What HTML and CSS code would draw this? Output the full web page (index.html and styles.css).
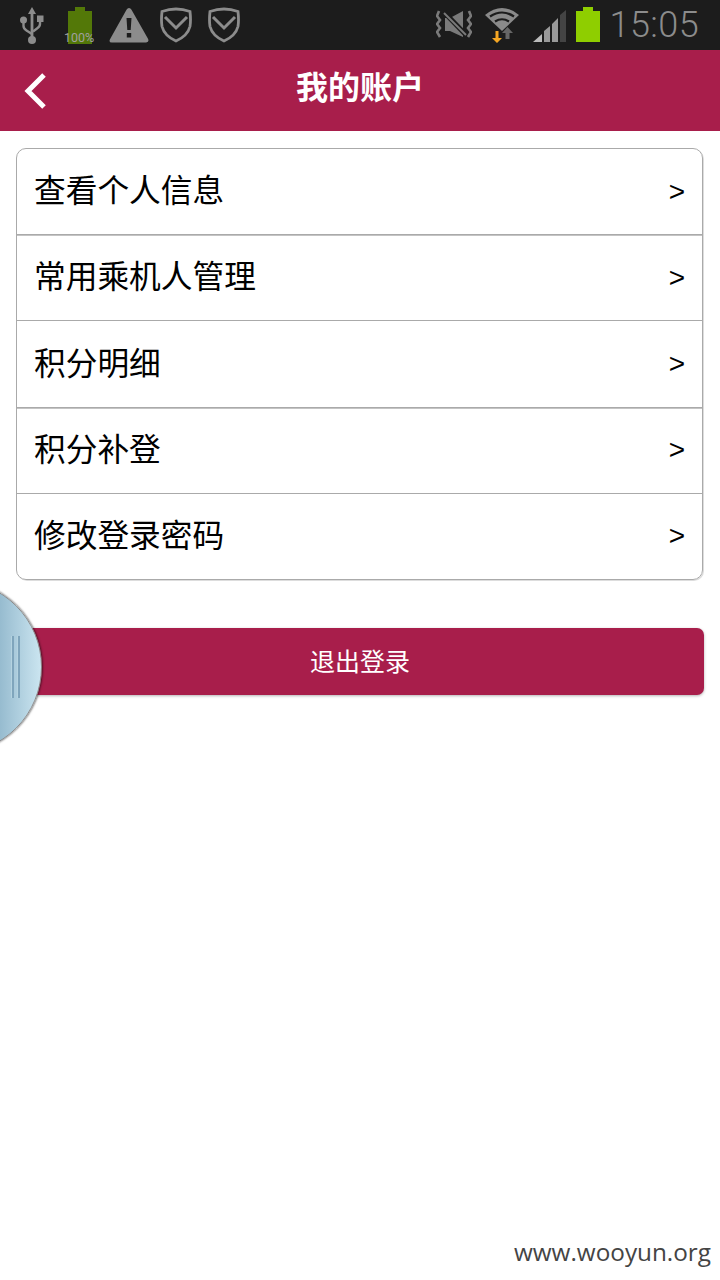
FILE: index.html
```html
<!DOCTYPE html>
<html lang="zh">
<head>
<meta charset="utf-8">
<title>我的账户</title>
<link rel="stylesheet" href="styles.css">
</head>
<body>
<div class="status">
  <div class="status-left">
    <svg class="i-usb" viewBox="0 0 24 38" width="24" height="38"><g fill="#8c8c8c"><path d="M12 0l4 7h-2.600v25h-2.800V7H8z"/><circle cx="12" cy="33" r="4"/><circle cx="3.500" cy="13" r="3.500"/><rect x="17" y="8.500" width="6.500" height="6.500"/></g><path d="M3.500 13v6q0 2.500 3 4.500l5.500 3.500M20 14v3q0 2.500-3 4.500l-4 3" fill="none" stroke="#8c8c8c" stroke-width="2.400"/></svg>
    <div class="batt-small">
      <svg viewBox="0 0 24 37" width="24" height="37"><path d="M7 0h10v4h7v33H0V4h7z" fill="#537808"/></svg>
      <span class="batt-label">100%</span>
    </div>
    <svg class="i-warn" viewBox="0 0 40 37" width="40" height="37"><path d="M20 1q1.500 0 2.500 1.800l16.500 29q1.500 3.200-1.800 3.700H2.800Q-.5 35.500 1 32.300l16.500-29.500Q18.500 1 20 1z" fill="#8c8c8c"/><path d="M17.500 11h5l-.8 12h-3.400zM17.800 26h4.400v4.400h-4.400z" fill="#1c1c1c"/></svg>
    <svg class="i-shield-a" viewBox="0 0 32 36" width="32" height="36"><path d="M16 2q7 0 14 2.500 1 9 0 15Q27.500 29 16 34 4.500 29 2 19.500q-1-6 0-15Q9 2 16 2z" fill="none" stroke="#8c8c8c" stroke-width="2.800"/><path d="M5 10l11 11L27 10" fill="none" stroke="#8c8c8c" stroke-width="3"/></svg>
    <svg class="i-shield-b" viewBox="0 0 32 36" width="32" height="36"><path d="M16 2q7 0 14 2.500 1 9 0 15Q27.500 29 16 34 4.500 29 2 19.500q-1-6 0-15Q9 2 16 2z" fill="none" stroke="#8c8c8c" stroke-width="2.800"/><path d="M5 10l11 11L27 10" fill="none" stroke="#8c8c8c" stroke-width="3"/></svg>
  </div>
  <div class="status-right">
    <svg class="i-mute" viewBox="0 0 36 28" width="36" height="28"><path d="M9 8h5l13-7v26l-13-6H9z" fill="#7a7a7a"/><path d="M7 1l24 25" stroke="#1c1c1c" stroke-width="5"/><path d="M8 3l22 22" stroke="#7a7a7a" stroke-width="2"/><path d="M3 1L1 6l3 4-3 4 3 4-3 4 3 5M33 1l2 5-3 4 3 4-3 4 3 4-3 5" fill="none" stroke="#7a7a7a" stroke-width="2.600"/></svg>
    <svg class="i-wifi" viewBox="0 0 34 38" width="34" height="38"><path d="M17 24L0 8q17-14 34 0z" fill="#8a8a8a"/><path d="M5 9.500q12-8 24 0M10 14.500q7-4.500 14 0" fill="none" stroke="#1c1c1c" stroke-width="2.200"/><path d="M22.500 20l5.500 6h-3.500v6h-4v-6H17z" fill="#666"/><path d="M10.500 24h3v7H17l-5 5-5-5h3.500z" fill="#f5a623"/></svg>
    <svg class="i-signal" viewBox="0 0 33 32" width="33" height="32"><path d="M33 0v32h-6V5z" fill="#444"/><path d="M25 8v24h-6V14zM17 16v16h-6V21z" fill="#999"/><path d="M9 24v8H0z" fill="#bbb"/></svg>
    <svg class="i-batt" viewBox="0 0 24 35" width="24" height="35"><path d="M7 0h10v4h7v31H0V4h7z" fill="#8fce00"/></svg>
    <span class="clock">15:05</span>
  </div>
</div>
<header class="topbar">
  <svg class="back" viewBox="0 0 24 38" width="24" height="38"><path d="M21 3L5 19l16 16" fill="none" stroke="#fff" stroke-width="5"/></svg>
  <h1 class="title">我的账户</h1>
</header>
<main class="content">
  <ul class="menu">
    <li class="row"><span class="label">查看个人信息</span><span class="arrow">&gt;</span></li>
    <li class="row"><span class="label">常用乘机人管理</span><span class="arrow">&gt;</span></li>
    <li class="row"><span class="label">积分明细</span><span class="arrow">&gt;</span></li>
    <li class="row"><span class="label">积分补登</span><span class="arrow">&gt;</span></li>
    <li class="row"><span class="label">修改登录密码</span><span class="arrow">&gt;</span></li>
  </ul>
  <button class="logout">退出登录</button>
</main>
<div class="handle"><i class="grip"></i><i class="grip"></i></div>
<div class="watermark">www.wooyun.org</div>
</body>
</html>
```
FILE: styles.css
```css
* { box-sizing: border-box; }
html, body { margin: 0; padding: 0; }
body {
  position: relative;
  width: 720px;
  height: 1280px;
  overflow: hidden;
  background: #fff;
  font-family: "Noto Sans CJK SC", "Noto Sans", sans-serif;
}
.status {
  height: 50px;
  background: #1c1c1c;
  display: flex;
  justify-content: space-between;
  align-items: center;
  padding: 0 21px 0 20px;
}
.status-left, .status-right { display: flex; align-items: center; }
.status-left svg, .status-right svg { display: block; }
.i-usb { margin-top: 1px; }
.batt-small { position: relative; width: 24px; height: 37px; margin: 1px 0 0 24px; }
.i-warn { margin: 1px 0 0 17px; }
.i-shield-a { margin-left: 11px; }
.i-shield-b { margin-left: 16px; }
.batt-label {
  position: absolute;
  left: -4px;
  bottom: -1px;
  font: 12.500px "Roboto", sans-serif;
  color: #a0a0a0;
  white-space: nowrap;
}
.i-mute { margin: 0 0 2px 0; }
.i-wifi { margin: 2px 0 0 13px; }
.i-signal { margin: 2px 0 0 14px; }
.i-batt { margin: 0 0 1px 10px; }
.clock {
  font: 300 36px "Roboto", sans-serif;
  color: #8c8c8c;
  letter-spacing: 0.4px;
  margin-left: 10px;
}
.topbar {
  position: relative;
  height: 81px;
  background: #a81e4b;
  display: flex;
  align-items: center;
  justify-content: center;
}
.back { position: absolute; left: 23px; top: 22px; }
.title {
  margin: 0 0 12px;
  font-size: 32px;
  font-weight: 700;
  color: #fff;
}
.content { padding: 17px 16px 0; }
.menu {
  list-style: none;
  margin: 0;
  padding: 0;
  width: 687px;
  height: 432px;
  border: 1px solid #aaa;
  border-radius: 10px;
  box-shadow: 1px 1px 0 #ddd;
  display: flex;
  flex-direction: column;
}
.row {
  flex: 1;
  display: flex;
  justify-content: space-between;
  align-items: center;
  padding: 0 17px 0 17px;
  font-size: 31.700px;
  color: #000;
  border-bottom: 1px solid #aaa;
}
.row:nth-child(odd) { box-shadow: 0 1px 0 #c4c4c4; }
.row:last-child { border-bottom: 0; box-shadow: none; }
.label { margin-bottom: 7px; }
.arrow { font: 28px "Liberation Sans", sans-serif; }
.logout {
  display: block;
  width: 688px;
  height: 67px;
  margin-top: 48px;
  padding: 0 0 4px;
  border: 0;
  border-radius: 7px;
  background: #a81e4b;
  color: #fff;
  font-family: inherit;
  font-size: 25px;
  box-shadow: 0 1px 3px rgba(0,0,0,.3);
}
.handle {
  position: absolute;
  left: -132px;
  top: 580px;
  width: 174px;
  height: 174px;
  border-radius: 50%;
  border: 1px solid #8a8a8a;
  background: linear-gradient(90deg, #7ea8c0 65%, #cbe5f0 100%);
  box-shadow: 1px 0 2px rgba(0,0,0,.5);
  display: flex;
  justify-content: flex-end;
  align-items: center;
  gap: 3px;
  padding-right: 21px;
}
.grip { width: 3px; height: 62px; background: #7fa5bc; border-left: 1px solid #b5d3e0; }
.watermark {
  position: absolute;
  right: 9px;
  bottom: 12px;
  font: 24.300px "Open Sans", sans-serif;
  color: #444;
}
```
